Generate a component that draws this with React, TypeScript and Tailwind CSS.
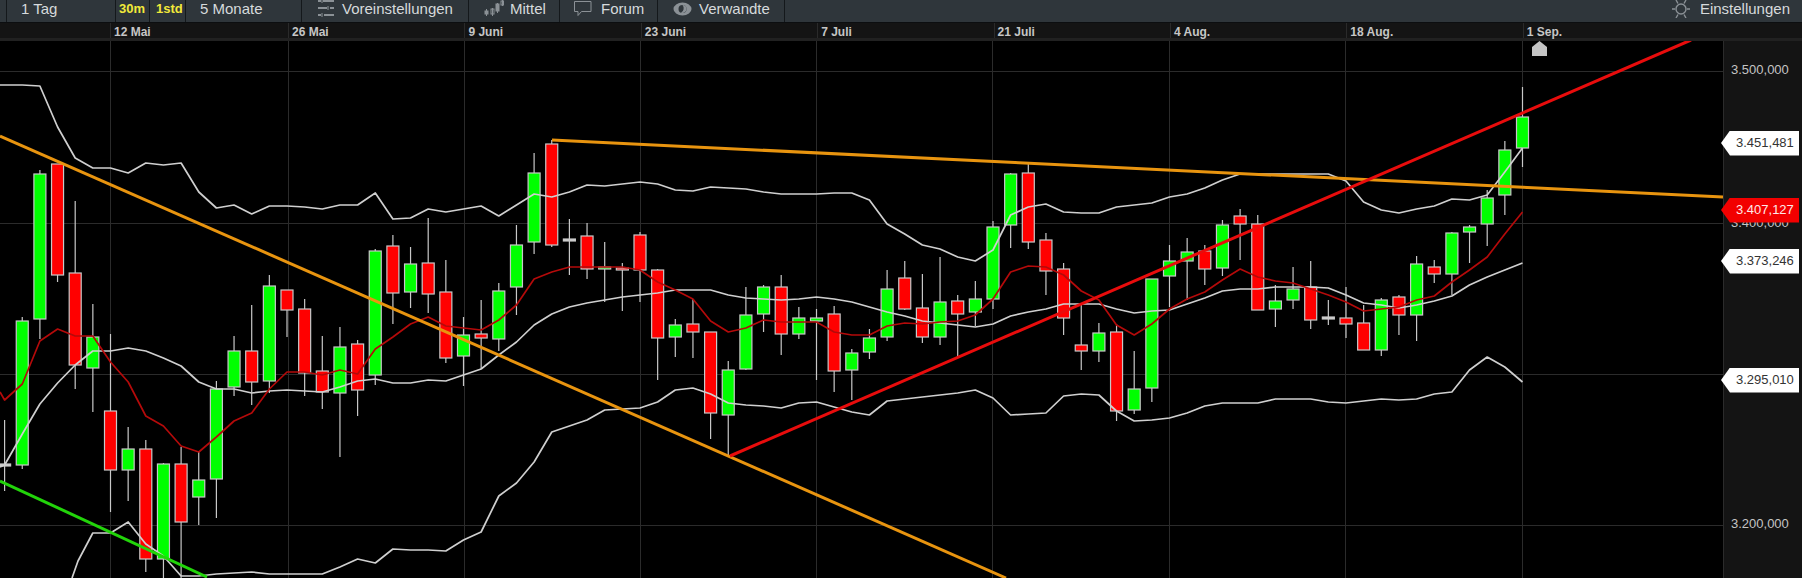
const X = (k: number) => 110.5 + 17.65 * k;

// wickTop, bodyTop, bodyBottom, wickBottom, colour - first entry is k = -6
type Candle = [number, number, number, number, 'g' | 'r' | 'w'];
const candles: Candle[] = [
  [420, 464, 466, 491, 'w'], [317, 321, 465, 469, 'g'], [170, 174, 319, 339, 'g'], [164, 164, 275, 282, 'r'],
  [201, 273, 365, 389, 'r'], [304, 337, 368, 412, 'g'], [334, 411, 470, 512, 'r'], [427, 449, 470, 501, 'g'],
  [440, 449, 559, 572, 'r'], [463, 464, 559, 578, 'g'], [447, 464, 522, 578, 'r'], [451, 480, 497, 525, 'g'],
  [381, 389, 479, 518, 'g'], [336, 351, 387, 396, 'g'], [305, 351, 382, 405, 'r'], [275, 286, 381, 393, 'g'],
  [290, 290, 310, 337, 'r'], [299, 309, 373, 396, 'r'], [336, 371, 392, 409, 'r'], [327, 347, 393, 457, 'g'],
  [340, 344, 390, 416, 'r'], [249, 251, 375, 385, 'g'], [235, 246, 293, 324, 'r'], [247, 264, 292, 308, 'g'],
  [218, 263, 294, 313, 'r'], [260, 292, 358, 363, 'r'], [317, 335, 356, 386, 'g'], [300, 334, 338, 369, 'r'],
  [283, 291, 339, 351, 'g'], [225, 245, 287, 315, 'g'], [153, 173, 242, 254, 'g'], [140, 144, 245, 247, 'r'],
  [219, 239, 241, 275, 'w'], [223, 236, 269, 279, 'r'], [242, 267, 269, 302, 'g'], [263, 268, 270, 311, 'r'],
  [232, 235, 270, 302, 'r'], [269, 270, 338, 380, 'r'], [319, 325, 337, 357, 'g'], [299, 324, 332, 358, 'r'],
  [332, 332, 413, 439, 'r'], [361, 370, 415, 456, 'g'], [287, 315, 369, 370, 'g'], [285, 287, 314, 332, 'g'],
  [275, 287, 334, 355, 'r'], [307, 318, 334, 339, 'g'], [309, 318, 321, 380, 'g'], [306, 314, 371, 392, 'r'],
  [349, 353, 370, 400, 'g'], [329, 338, 352, 359, 'g'], [270, 289, 337, 341, 'g'], [261, 278, 309, 310, 'r'],
  [274, 308, 337, 343, 'r'], [257, 302, 337, 345, 'g'], [295, 301, 314, 357, 'r'], [281, 299, 312, 326, 'g'],
  [221, 227, 299, 309, 'g'], [173, 174, 225, 248, 'g'], [164, 173, 242, 249, 'r'], [233, 240, 271, 295, 'r'],
  [263, 269, 318, 335, 'r'], [305, 345, 351, 370, 'r'], [323, 333, 351, 362, 'g'], [324, 332, 411, 421, 'r'],
  [351, 389, 410, 414, 'g'], [279, 279, 388, 402, 'g'], [245, 261, 276, 307, 'g'], [238, 252, 261, 300, 'g'],
  [245, 251, 269, 285, 'r'], [220, 225, 268, 276, 'g'], [209, 216, 224, 260, 'r'], [215, 224, 310, 310, 'r'],
  [285, 301, 309, 327, 'g'], [267, 289, 300, 309, 'g'], [261, 287, 320, 329, 'r'], [300, 317, 319, 325, 'w'],
  [287, 318, 324, 338, 'r'], [305, 323, 350, 350, 'r'], [298, 300, 350, 356, 'g'], [295, 297, 315, 335, 'r'],
  [256, 264, 315, 341, 'g'], [260, 267, 274, 283, 'r'], [232, 233, 274, 295, 'g'], [225, 227, 232, 263, 'g'],
  [190, 198, 224, 246, 'g'], [141, 150, 195, 215, 'g'], [87, 117, 148, 167, 'g'],
];

const upper = [
  85, 86, 127, 158, 168, 168, 173, 163, 165, 163, 192, 208, 205, 214, 206, 206, 207, 209, 205, 205, 193, 219, 218, 209,
  212, 209, 206, 216, 205, 194, 197, 192, 185, 186, 184, 182, 184, 190, 191, 187, 188, 189, 192, 194, 194, 194, 193, 193,
  200, 224, 234, 245, 249, 257, 261, 250, 215, 207, 204, 212, 213, 213, 207, 205, 203, 197, 194, 188, 180, 174, 174, 174,
  174, 174, 174, 181, 202, 210, 213, 209, 206, 199, 200, 195, 172, 148,
];
const middle = [
  465, 434, 404, 383, 365, 351, 351, 348, 351, 358, 366, 382, 389, 389, 393, 391, 390, 391, 392, 387, 381, 379, 383, 383,
  380, 381, 375, 369, 355, 342, 325, 314, 307, 303, 300, 297, 295, 293, 290, 290, 290, 295, 298, 299, 300, 299, 297, 299,
  302, 307, 312, 316, 321, 323, 325, 327, 324, 316, 312, 309, 304, 304, 304, 309, 313, 311, 310, 304, 298, 291, 289, 289,
  287, 287, 287, 288, 295, 303, 305, 308, 305, 301, 296, 285, 277, 270, 263,
];
const lower = [
  533, 533, 522, 544, 556, 576, 576, 574, 573, 572, 574, 574, 574, 574, 567, 559, 563, 549, 550, 550, 551, 540, 532, 496,
  483, 462, 432, 426, 420, 410, 409, 408, 402, 390, 388, 394, 403, 405, 406, 408, 403, 402, 407, 412, 415, 401, 399, 397,
  395, 393, 390, 398, 415, 414, 413, 396, 394, 395, 411, 421, 420, 418, 413, 406, 403, 403, 403, 399, 399, 399, 402, 403,
  401, 399, 400, 399, 394, 392, 370, 357, 367, 382,
];
const ma = [
  400, 384, 341, 329, 336, 336, 362, 382, 416, 426, 446, 452, 437, 421, 413, 389, 372, 372, 375, 370, 374, 349, 337, 324,
  317, 326, 328, 330, 320, 305, 279, 272, 267, 267, 267, 267, 270, 282, 290, 299, 321, 332, 328, 320, 322, 322, 322, 332,
  335, 335, 326, 323, 324, 322, 321, 315, 299, 272, 266, 267, 275, 291, 300, 325, 335, 324, 309, 299, 292, 280, 269, 277,
  281, 283, 289, 295, 302, 311, 309, 307, 300, 296, 282, 270, 257, 234, 212,
];

const pts = (start: number, ys: number[], before = '') =>
  before + ys.map((y, i) => `${X(start + i).toFixed(1)},${y}`).join(' ');

const gridX = [110, 288, 464, 640.5, 816.5, 992.5, 1169.5, 1345.5, 1522.5];
const gridY = [71, 223, 374, 525];

const dates = ['26 Mai', '9 Juni', '23 Juni', '7 Juli', '21 Juli', '4 Aug.', '18 Aug.', '1 Sep.'];

function SlidersIcon() {
  return (
    <svg width="20" height="18" viewBox="0 0 20 18" fill="none" stroke="#8b9196" strokeWidth="2">
      <path d="M2 1h3M7 1h11M2 8h9M14 8h4M2 15h3M8 15h10" />
      <path d="M6 -1v4M12 6v4M6 13v4" strokeWidth="1" />
    </svg>
  );
}

function CandleIcon() {
  return (
    <svg width="20" height="18" viewBox="0 0 20 18" fill="none" stroke="#8b9196" strokeWidth="1">
      <path d="M2.5 9v7M8.5 8v8M13.5 3v10M18.5 0v6" />
      <rect x="1" y="11" width="3" height="3" fill="#8b9196" />
      <rect x="7" y="9" width="3" height="5" />
      <rect x="12" y="4" width="3" height="7" fill="#8b9196" />
      <rect x="17" y="1" width="2.5" height="4" />
    </svg>
  );
}

function ChatIcon() {
  return (
    <svg width="18" height="18" viewBox="0 0 18 18" fill="none" stroke="#8b9196" strokeWidth="1">
      <path d="M.5 1.5h16.5v10h-9.5l-3.5 4v-4h-3.5z" />
    </svg>
  );
}

function EyeIcon() {
  return (
    <svg width="19" height="14" viewBox="0 0 19 14">
      <ellipse cx="9.5" cy="7" rx="9" ry="6.5" fill="#8b9196" />
      <circle cx="9.5" cy="7" r="4" fill="#2f363b" />
      <path d="M9.5 3a4 4 0 0 1 4 4a4 4 0 0 1-5.5 3.7a5 5 0 0 0 1.5-7.7z" fill="#8b9196" />
    </svg>
  );
}

function GearIcon() {
  return (
    <svg width="18" height="18" viewBox="0 0 18 18" fill="none" stroke="#8b9196">
      <circle cx="9" cy="9" r="5" strokeWidth="1.4" />
      <path d="M0 9h3M15 9h3M4 0l2 3.5M14 0l-2 3.5M4 18l2-3.5M14 18l-2-3.5" strokeWidth="1.4" />
    </svg>
  );
}

function PriceTag({ y, label, red }: { y: number; label: string; red?: boolean }) {
  return (
    <div
      className={`absolute left-[-3px] flex h-[25px] w-[78px] items-center pl-[15px] text-[13px] [clip-path:polygon(0_50%,9px_0,100%_0,100%_100%,9px_100%)] ${
        red ? 'bg-[#f20000] text-[#ffe8e8]' : 'bg-white text-[#333333]'
      }`}
      style={{ top: y - 41 - 12.5 }}
    >
      {label}
    </div>
  );
}

function AxisLabel({ y, label }: { y: number; label: string }) {
  return (
    <div className="absolute left-[7px] text-[13px] leading-[14px] text-[#c4c4c4]" style={{ top: y - 41 - 7 }}>
      {label}
    </div>
  );
}

export default function App() {
  return (
    <div className="flex h-[578px] w-[1802px] flex-col overflow-hidden bg-black font-['Liberation_Sans',Arial,sans-serif]">
      {/* toolbar */}
      <div className="flex h-[23px] shrink-0 items-stretch border-b border-[#0c0e10] bg-[#2f363b] text-[15px] leading-[18px] text-[#d6dadc]">
        <div className="w-[7px] border-r border-[#14181b]" />
        <div className="w-[109px] border-r border-[#14181b] pl-[14px]">1 Tag</div>
        <div className="w-[34px] border-r border-[#14181b] pl-[3px] text-[13px] font-bold text-[#f2e93a]">30m</div>
        <div className="w-[36px] border-r border-[#14181b] pl-[6px] text-[13px] font-bold text-[#f2e93a]">1std</div>
        <div className="w-[116px] border-r border-[#14181b] pl-[14px]">5 Monate</div>
        <div className="flex w-[167px] gap-[6px] overflow-hidden border-r border-[#14181b] pl-[14px]">
          <SlidersIcon />
          <span>Voreinstellungen</span>
        </div>
        <div className="flex w-[91px] gap-[6px] border-r border-[#14181b] pl-[15px]">
          <CandleIcon />
          <span>Mittel</span>
        </div>
        <div className="flex w-[98px] gap-[9px] border-r border-[#14181b] pl-[14px]">
          <ChatIcon />
          <span>Forum</span>
        </div>
        <div className="flex w-[127px] items-start gap-[7px] border-r border-[#14181b] pl-[15px]">
          <span className="mt-[2px] flex">
            <EyeIcon />
          </span>
          <span>Verwandte</span>
        </div>
        <div className="flex-1" />
        <div className="flex items-start gap-[10px] pr-[12px]">
          <GearIcon />
          <span>Einstellungen</span>
        </div>
      </div>

      {/* date axis */}
      <div className="flex h-[18px] shrink-0 border-b-[3px] border-[#212121] bg-[#141414] text-[12px] font-bold leading-[18px] text-[#c6c6c6]">
        <div className="w-[110px] shrink-0" />
        <div className="w-[178px] shrink-0 border-l border-[#2a2a2a] pl-[3px]">12 Mai</div>
        {dates.map((d) => (
          <div key={d} className="w-[176.4px] shrink-0 border-l border-[#2a2a2a] pl-[3px]">
            {d}
          </div>
        ))}
      </div>

      {/* chart + price axis */}
      <div className="flex min-h-0 flex-1">
        <svg width="1723" height="537" viewBox="0 41 1723 537" className="block shrink-0 bg-black blur-[0.35px]">
          <g stroke="#2b2b2b" strokeWidth="1" shapeRendering="crispEdges">
            {gridX.map((x) => (
              <line key={x} x1={x} y1="41" x2={x} y2="578" />
            ))}
            {gridY.map((y) => (
              <line key={y} x1="0" y1={y} x2="1723" y2={y} />
            ))}
          </g>

          {candles.map(([wt, bt, bb, wb, c], i) => {
            const x = X(i - 6);
            return (
              <g key={i}>
                <line x1={x} y1={wt} x2={x} y2={wb} stroke="#c8c8c8" strokeWidth="1.2" />
                <rect
                  x={x - 6}
                  y={bt}
                  width="12"
                  height={bb - bt}
                  fill={c === 'g' ? '#00ff00' : c === 'r' ? '#ff0000' : '#d0d0d0'}
                  stroke="#c8c8c8"
                  strokeWidth="1.2"
                />
              </g>
            );
          })}

          <g fill="none" strokeLinejoin="round">
            <polyline points={pts(-5, upper, '0,85 ')} stroke="#cfcfcf" strokeWidth="1.7" />
            <polyline points={pts(-6, middle, '0,467 ')} stroke="#cfcfcf" strokeWidth="1.7" />
            <polyline points={pts(-1, lower, '72,578 78,561 ')} stroke="#cfcfcf" strokeWidth="1.7" />
            <polyline points={pts(-6, ma, '0,392 ')} stroke="#b40a0a" strokeWidth="1.7" />
          </g>

          <line x1="0" y1="136" x2="1006" y2="578" stroke="#e8940f" strokeWidth="3" />
          <line x1="552" y1="140" x2="1723" y2="197" stroke="#e8940f" strokeWidth="3" />
          <line x1="730" y1="456" x2="1691" y2="40" stroke="#e80c0c" strokeWidth="3" />
          <line x1="0" y1="481" x2="207" y2="577" stroke="#22d40a" strokeWidth="3" />

          <path d="M1539.5 41l7.5 6v9h-15v-9z" fill="#c4c4c4" />
        </svg>

        <div className="relative flex-1 border-l border-[#2b2b2b] bg-[#141414]">
          <AxisLabel y={70} label="3.500,000" />
          <AxisLabel y={223} label="3.400,000" />
          <AxisLabel y={524} label="3.200,000" />
          <PriceTag y={143} label="3.451,481" />
          <PriceTag y={210} label="3.407,127" red />
          <PriceTag y={261} label="3.373,246" />
          <PriceTag y={380} label="3.295,010" />
        </div>
      </div>
    </div>
  );
}
